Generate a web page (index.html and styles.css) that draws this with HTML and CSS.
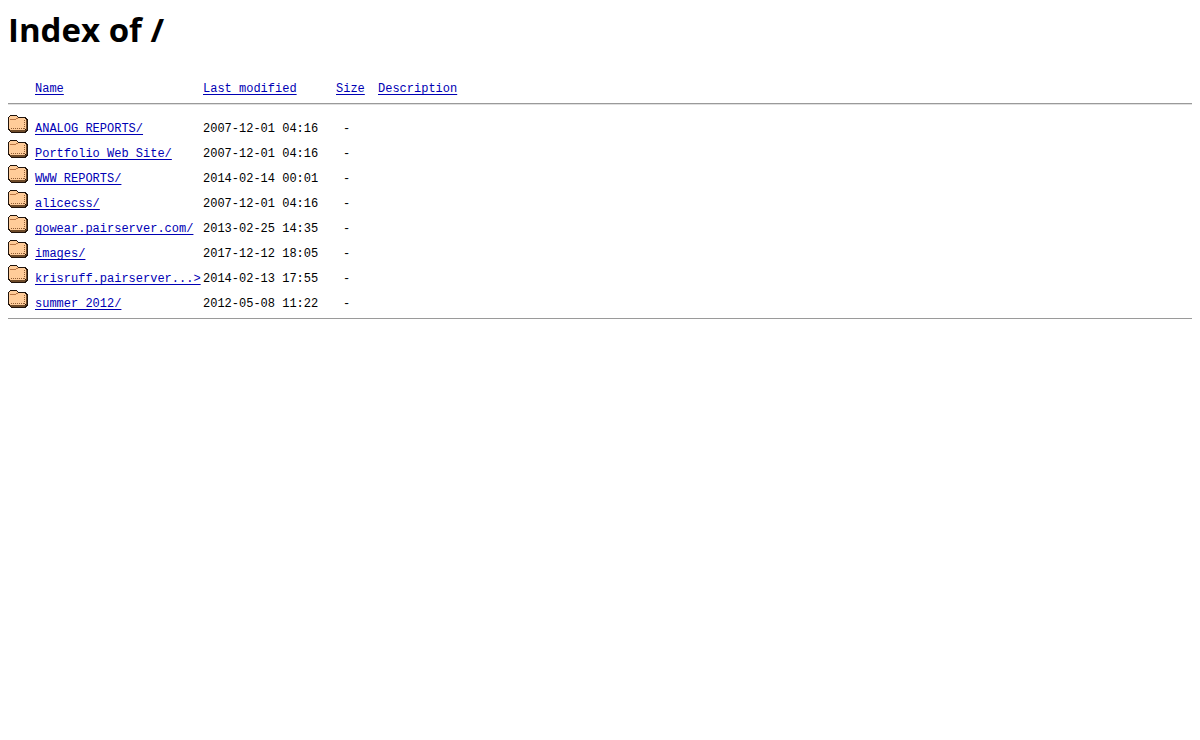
FILE: index.html
```html
<!DOCTYPE html>
<html lang="en">
<head>
<meta charset="utf-8">
<title>Index of /</title>
<link rel="stylesheet" href="styles.css">
</head>
<body>
<svg class="sprite" aria-hidden="true">
  <symbol id="folder" viewBox="0 0 20 22">
    <path fill="#21140c" d="M2 3h7v1h1v1h8v1h1v1h1v12h-1v1h-1v1H3v-1H2v-1H1v-1H0V5h1V4h1z"/>
    <path fill="#6e4a28" d="M18 8h1v10h-1v1h-1v1H3v-1H2v-1h16z"/>
    <path fill="#ffcc99" d="M2 4h7v1h1v1h7v1h1v10h-1v1H2v-1H1V5h1z"/>
    <path fill="none" stroke="#b87444" d="M2 7.5h6M8 6.5h2"/>
    <path fill="none" stroke="#8f5c34" stroke-dasharray="1 1" d="M3 16.5h14M16.5 8v9"/>
  </symbol>
</svg>
<h1 class="title">Index of /</h1>
<table class="listing">
  <colgroup><col class="col-icon"><col class="col-name"><col class="col-date"><col class="col-size"><col></colgroup>
  <thead>
    <tr><th></th><th><a href="?C=N">Name</a></th><th><a href="?C=M">Last modified</a></th><th><a href="?C=S">Size</a></th><th><a href="?C=D">Description</a></th></tr>
  </thead>
  <tbody>
    <tr><td><svg class="folder"><use href="#folder"/></svg></td><td><a href="ANALOG_REPORTS/">ANALOG REPORTS/</a></td><td>2007-12-01 04:16</td><td class="size">-</td><td></td></tr>
    <tr><td><svg class="folder"><use href="#folder"/></svg></td><td><a href="Portfolio/">Portfolio Web Site/</a></td><td>2007-12-01 04:16</td><td class="size">-</td><td></td></tr>
    <tr><td><svg class="folder"><use href="#folder"/></svg></td><td><a href="WWW_REPORTS/">WWW REPORTS/</a></td><td>2014-02-14 00:01</td><td class="size">-</td><td></td></tr>
    <tr><td><svg class="folder"><use href="#folder"/></svg></td><td><a href="alicecss/">alicecss/</a></td><td>2007-12-01 04:16</td><td class="size">-</td><td></td></tr>
    <tr><td><svg class="folder"><use href="#folder"/></svg></td><td><a href="gowear.pairserver.com/">gowear.pairserver.com/</a></td><td>2013-02-25 14:35</td><td class="size">-</td><td></td></tr>
    <tr><td><svg class="folder"><use href="#folder"/></svg></td><td><a href="images/">images/</a></td><td>2017-12-12 18:05</td><td class="size">-</td><td></td></tr>
    <tr><td><svg class="folder"><use href="#folder"/></svg></td><td><a href="krisruff.pairserver.com/">krisruff.pairserver...&gt;</a></td><td>2014-02-13 17:55</td><td class="size">-</td><td></td></tr>
    <tr><td><svg class="folder"><use href="#folder"/></svg></td><td><a href="summer_2012/">summer 2012/</a></td><td>2012-05-08 11:22</td><td class="size">-</td><td></td></tr>
  </tbody>
</table>
</body>
</html>
```
FILE: styles.css
```css
body {
  margin: 8px;
  background: #fff;
  color: #000;
}

.sprite {
  display: none;
}

.title {
  margin: 0 0 29px;
  font: bold 33px/44px "Open Sans", "Noto Sans", sans-serif;
}

.listing {
  width: 100%;
  table-layout: fixed;
  border-collapse: separate;
  border-spacing: 0;
  border-bottom: 1px solid #9a9a9a;
  box-shadow: 0 1px #e0e0e0;
  font: 12px/16px "Liberation Mono", monospace;
  white-space: nowrap;
}

.col-icon { width: 27px; }
.col-name { width: 168px; }
.col-date { width: 133px; }
.col-size { width: 42px; }

.listing th {
  padding: 0 0 6px;
  border-bottom: 1px solid #9a9a9a;
  box-shadow: 0 1px #e0e0e0;
  font-weight: normal;
  text-align: left;
}

.listing td {
  height: 16px;
  padding: 9px 0 0;
  vertical-align: top;
}

.listing td:first-child {
  padding: 0;
}

.listing tbody::before {
  content: "";
  display: table-row;
  height: 8px;
}

.listing tbody::after {
  content: "";
  display: table-row;
  height: 6px;
}

.listing .size {
  padding-left: 7px;
}

.listing a {
  color: #0000b4;
  text-underline-offset: 2px;
}

.folder {
  display: block;
  width: 20px;
  height: 22px;
  shape-rendering: crispEdges;
}
```
